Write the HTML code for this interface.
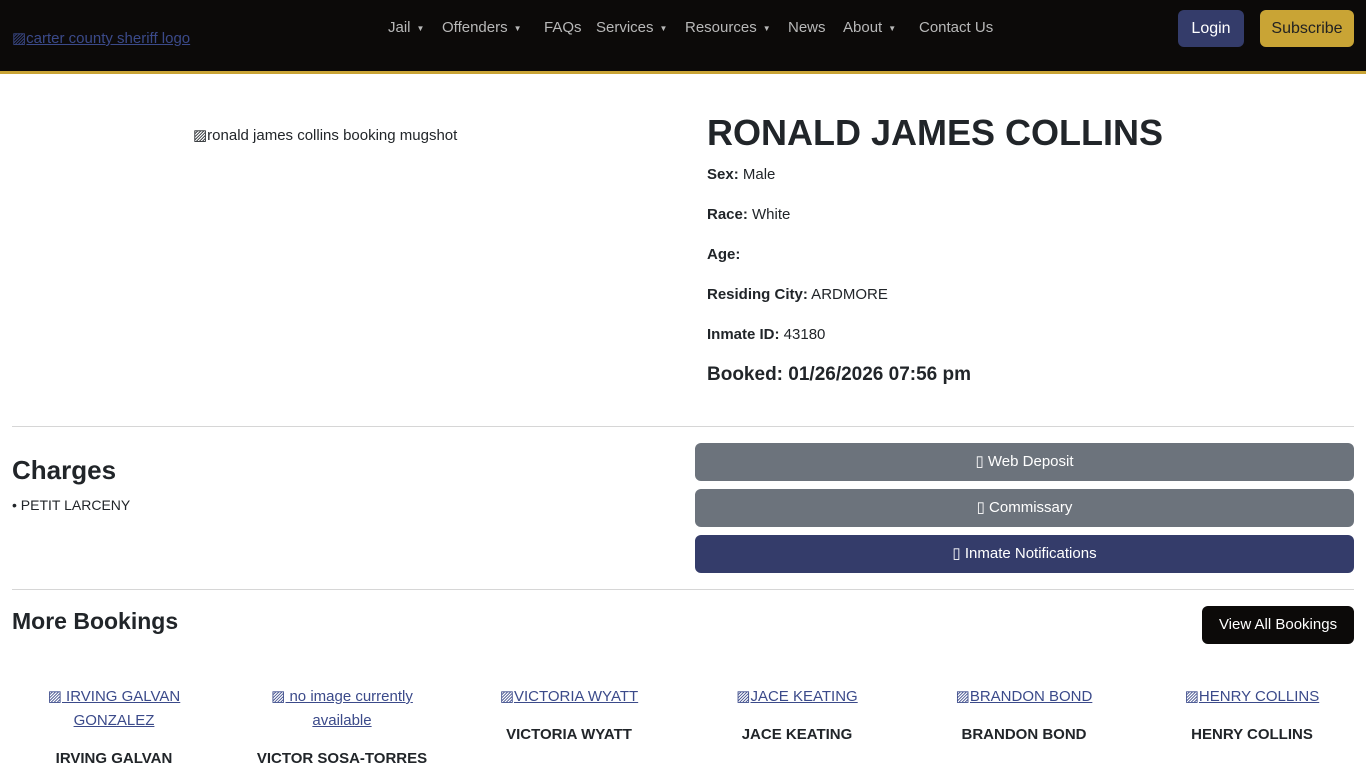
<!DOCTYPE html>
<html><head><meta charset="utf-8"><style>
*{box-sizing:border-box}
body{margin:0;font-family:"Liberation Sans",sans-serif;color:#212529;background:#fff;width:1366px;height:768px;overflow:hidden;position:relative;font-size:15px}
.nav{position:absolute;left:0;top:0;width:1366px;height:74px;background:#0c0a09;border-bottom:3px solid #c9a435}
.abs{position:absolute;white-space:nowrap}
.nav .logo{left:12px;top:29px;color:#3b4a8a;text-decoration:underline;font-size:15px}
.m{position:absolute;top:19px;color:#b8b8b8;font-size:15px;white-space:nowrap}
.car{font-size:8px;margin-left:6px;vertical-align:middle}
.btn{position:absolute;border-radius:6px;color:#fff;text-align:center;font-size:16px}
h1{margin:0;font-weight:bold}
.f{font-size:15px}
.f b{font-weight:bold}
hr{position:absolute;left:12px;width:1342px;border:0;border-top:1px solid #d6d6d6;margin:0}
.bk{position:absolute;top:685px;text-align:center;font-size:15px;line-height:24px}
.bk a{color:#3b4a8a;text-decoration:underline}
.bk b{display:block;font-size:15px}
</style></head><body>
<div class="nav">
<a class="abs logo">▨carter county sheriff logo</a>
<span class="m" style="left:388px">Jail<span class="car">▼</span></span>
<span class="m" style="left:442px">Offenders<span class="car">▼</span></span>
<span class="m" style="left:544px">FAQs</span>
<span class="m" style="left:596px">Services<span class="car">▼</span></span>
<span class="m" style="left:685px">Resources<span class="car">▼</span></span>
<span class="m" style="left:788px">News</span>
<span class="m" style="left:843px">About<span class="car">▼</span></span>
<span class="m" style="left:919px">Contact Us</span>
<div class="btn" style="left:1178px;top:10px;width:66px;height:37px;line-height:37px;background:#343c6a">Login</div>
<div class="btn" style="left:1260px;top:10px;width:94px;height:37px;line-height:37px;background:#c9a435;color:#222">Subscribe</div>
</div>
<div class="abs" style="left:193px;top:126px;font-size:15px">▨ronald james collins booking mugshot</div>
<h1 class="abs" style="left:707px;top:112px;font-size:36px;font-weight:600">RONALD JAMES COLLINS</h1>
<div class="abs f" style="left:707px;top:166px"><b>Sex:</b> Male</div>
<div class="abs f" style="left:707px;top:206px"><b>Race:</b> White</div>
<div class="abs f" style="left:707px;top:246px"><b>Age:</b></div>
<div class="abs f" style="left:707px;top:286px"><b>Residing City:</b> ARDMORE</div>
<div class="abs f" style="left:707px;top:326px"><b>Inmate ID:</b> 43180</div>
<div class="abs" style="left:707px;top:364px;font-size:19px;font-weight:600">Booked: 01/26/2026 07:56 pm</div>
<hr style="top:426px">
<div class="abs" style="left:12px;top:455px;font-size:26px;font-weight:600">Charges</div>
<div class="abs" style="left:12px;top:497px;font-size:14px">• PETIT LARCENY</div>
<div class="btn" style="left:695px;top:443px;width:659px;height:38px;line-height:38px;background:#6c737c;font-size:15px">▯ Web Deposit</div>
<div class="btn" style="left:695px;top:489px;width:659px;height:38px;line-height:38px;background:#6c737c;font-size:15px">▯ Commissary</div>
<div class="btn" style="left:695px;top:535px;width:659px;height:38px;line-height:38px;background:#343c6a;font-size:15px">▯ Inmate Notifications</div>
<hr style="top:589px">
<div class="abs" style="left:12px;top:608px;font-size:23px;font-weight:600">More Bookings</div>
<div class="btn" style="left:1202px;top:606px;width:152px;height:38px;line-height:38px;background:#0c0a09;font-size:15px">View All Bookings</div>
<div class="bk" style="left:12px;width:204px"><a>▨ IRVING GALVAN<br>GONZALEZ</a><b style="margin-top:14px">IRVING GALVAN</b></div>
<div class="bk" style="left:240px;width:204px"><a>▨ no image currently<br>available</a><b style="margin-top:14px">VICTOR SOSA-TORRES</b></div>
<div class="bk" style="left:467px;width:204px"><a>▨VICTORIA WYATT</a><b style="margin-top:14px">VICTORIA WYATT</b></div>
<div class="bk" style="left:695px;width:204px"><a>▨JACE KEATING</a><b style="margin-top:14px">JACE KEATING</b></div>
<div class="bk" style="left:922px;width:204px"><a>▨BRANDON BOND</a><b style="margin-top:14px">BRANDON BOND</b></div>
<div class="bk" style="left:1150px;width:204px"><a>▨HENRY COLLINS</a><b style="margin-top:14px">HENRY COLLINS</b></div>
</body></html>
